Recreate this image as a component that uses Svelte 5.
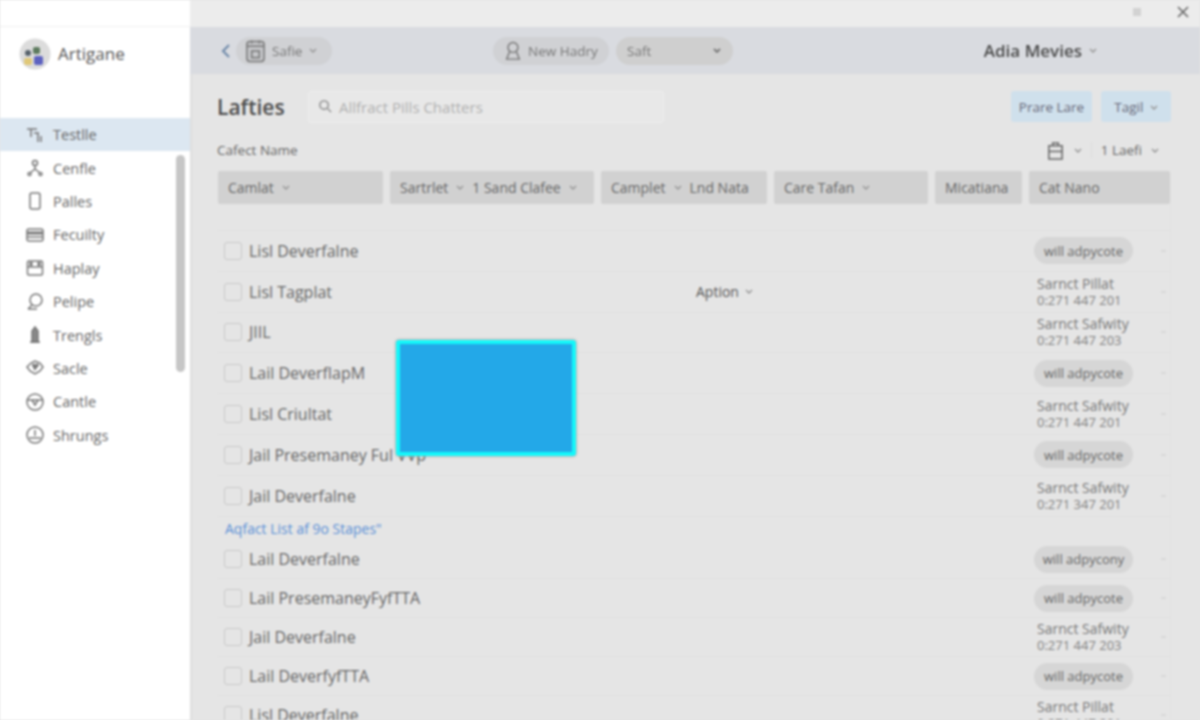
<script lang="ts">
	type Row = { name: string; pill?: string; contact?: string; phone?: string; aption?: boolean };

	const navItems = [
		{ id: 'text', label: 'Testlle' },
		{ id: 'person', label: 'Cenfle' },
		{ id: 'phone', label: 'Palles' },
		{ id: 'tray', label: 'Fecuilty' },
		{ id: 'cal', label: 'Haplay' },
		{ id: 'search', label: 'Pelipe' },
		{ id: 'tower', label: 'Trengls' },
		{ id: 'leaf', label: 'Sacle' },
		{ id: 'cup', label: 'Cantle' },
		{ id: 'clock', label: 'Shrungs' }
	];

	const columns = [
		{ parts: ['Camlat'], arrow: true },
		{ parts: ['Sartrlet', '1 Sand Clafee'], arrow: true },
		{ parts: ['Camplet', 'Lnd Nata'], arrow: false },
		{ parts: ['Care Tafan'], arrow: true },
		{ parts: ['Micatiana'], arrow: false },
		{ parts: ['Cat Nano'], arrow: false }
	];

	const firstRows: Row[] = [
		{ name: 'Lisl Deverfalne', pill: 'will adpycote' },
		{ name: 'Lisl Tagplat', contact: 'Sarnct Pillat', phone: '0:271 447 201', aption: true },
		{ name: 'JIIL', contact: 'Sarnct Safwity', phone: '0:271 447 203' },
		{ name: 'Lail DeverflapM', pill: 'will adpycote' },
		{ name: 'Lisl Criultat', contact: 'Sarnct Safwity', phone: '0:271 447 201' },
		{ name: 'Jail Presemaney Ful VVp', pill: 'will adpycote' },
		{ name: 'Jail Deverfalne', contact: 'Sarnct Safwity', phone: '0:271 347 201' }
	];

	const secondRows: Row[] = [
		{ name: 'Lail Deverfalne', pill: 'will adpycony' },
		{ name: 'Lail PresemaneyFyfTTA', pill: 'will adpycote' },
		{ name: 'Jail Deverfalne', contact: 'Sarnct Safwity', phone: '0:271 447 203' },
		{ name: 'Lail DeverfyfTTA', pill: 'will adpycote' },
		{ name: 'Lisl Deverfalne', contact: 'Sarnct Pillat', phone: '0:271 447 201' }
	];
</script>

{#snippet caret(cls = '')}
	<svg class="caret {cls}" viewBox="0 0 8 5" aria-hidden="true"><path d="M1 1l3 3 3-3" /></svg>
{/snippet}

{#snippet row(item: Row, cls: string)}
	<div class="row {cls}">
		<span class="check"></span>
		<span class="name">{item.name}</span>
		{#if item.aption}
			<span class="aption">Aption {@render caret()}</span>
		{/if}
		<div class="last">
			{#if item.pill}
				<span class="pill">{item.pill}</span>
			{:else}
				<span class="contact">{item.contact}</span>
				<span class="phone">{item.phone}</span>
			{/if}
		</div>
		<span class="dot"></span>
	</div>
{/snippet}

<div class="app">
	<aside class="sidebar">
		<div class="strip"></div>
		<div class="brand">
			<svg class="logo" viewBox="0 0 32 32" aria-hidden="true">
				<circle cx="16" cy="16" r="15.5" fill="#dcdcdc" />
				<circle cx="9" cy="15" r="3" fill="#55606a" />
				<rect x="14" y="9" width="7" height="7" rx="2" fill="#5d7a5e" />
				<rect x="5" y="20" width="8" height="7" rx="2" fill="#e0c878" />
				<rect x="15" y="18" width="9" height="9" rx="2" fill="#5d62c0" />
			</svg>
			<span>Artigane</span>
		</div>
		<nav class="nav">
			{#each navItems as item, i}
				<div class="nav-item" class:active={i === 0}>
					<svg class="nav-icon" viewBox="0 0 20 20" aria-hidden="true">
						{#if item.id === 'text'}
							<path d="M2 4h10M6 4v8M9 8h5M13 8v9M16 11v6" />
						{:else if item.id === 'person'}
							<circle cx="10" cy="5" r="2.5" /><path d="M10 8v3M10 11l-5 4M10 11l5 4" /><circle cx="4.5" cy="16" r="1.5" /><circle cx="15.5" cy="16" r="1.5" />
						{:else if item.id === 'phone'}
							<rect x="5" y="2" width="10" height="16" rx="2" />
						{:else if item.id === 'tray'}
							<rect x="2" y="4" width="16" height="12" rx="2" /><path class="fat" d="M2 8h16" /><path d="M2 12h16" />
						{:else if item.id === 'cal'}
							<rect x="2.5" y="3" width="15" height="14" rx="1.5" /><path class="fat" d="M6 4v4M14 4v4" /><path d="M2.5 9h15" />
						{:else if item.id === 'search'}
							<circle cx="11" cy="8" r="6" /><path d="M7 13l-4 4M3 17h9" />
						{:else if item.id === 'tower'}
							<path class="solid" d="M10 2l3 4v11H7V6z" /><path d="M5 17h10" />
						{:else if item.id === 'leaf'}
							<path d="M2 9l4-4 4-2 5 2 3 4-3 4-5 3-5-3z" /><path class="fat" d="M8 6l2 4 3-4" />
						{:else if item.id === 'cup'}
							<circle cx="10" cy="10" r="8" /><path d="M3 8h14M7 8l3 5 3-5" />
						{:else}
							<circle cx="10" cy="10" r="8" /><path d="M10 5v6M4 13h12" />
						{/if}
					</svg>
					<span>{item.label}</span>
				</div>
			{/each}
			<div class="nav-thumb"></div>
		</nav>
	</aside>

	<main class="main">
		<div class="titlebar">
			<span class="win-min"></span>
			<svg class="win-close" viewBox="0 0 12 12" aria-hidden="true"><path d="M1 1l10 10M11 1L1 11" /></svg>
		</div>

		<header class="topbar">
			<svg class="back" viewBox="0 0 10 16" aria-hidden="true"><path d="M8 2L2 8l6 6" /></svg>
			<div class="chip chip-file">
				<svg class="chip-icon file-icon" viewBox="0 0 20 24" aria-hidden="true">
					<rect x="1" y="2" width="18" height="21" rx="3" />
					<path d="M1 7h18M6 1v3M14 1v3" />
					<rect x="6" y="12" width="8" height="7" />
				</svg>
				<span>Safie</span>
				{@render caret()}
			</div>
			<div class="chip chip-new">
				<svg class="chip-icon" viewBox="0 0 20 22" aria-hidden="true">
					<circle cx="10" cy="7" r="5.5" /><path d="M6 12l-3 8h14l-3-8" />
				</svg>
				<span>New Hadry</span>
			</div>
			<div class="chip chip-select">
				<span>Saft</span>
				{@render caret('dark')}
			</div>
			<div class="account">
				<span>Adia Mevies</span>
				{@render caret()}
			</div>
		</header>

		<section class="content">
			<div class="title-row">
				<h1>Lafties</h1>
				<div class="search">
					<svg viewBox="0 0 16 16" aria-hidden="true"><circle cx="6.5" cy="6.5" r="4.5" /><path d="M10 10l4 4" /></svg>
					<span>Allfract Pills Chatters</span>
				</div>
				<button class="btn btn-lare">Prare Lare</button>
				<button class="btn btn-tag">Tagil {@render caret()}</button>
			</div>

			<div class="sub-row">
				<span class="sub-label">Cafect Name</span>
				<svg class="clip" viewBox="0 0 18 20" aria-hidden="true">
					<path d="M2 5h14v14H2zM6 5V2h6v3" /><path d="M2 11h14" />
				</svg>
				{@render caret()}
				<span class="sep"></span>
				<span class="sub-count">1 Laefi</span>
				{@render caret()}
			</div>

			<div class="table">
				<div class="head">
					{#each columns as col}
						<div class="head-cell">
							<span>{col.parts[0]}</span>
							{#if col.parts[1]}
								{@render caret()}
								<span>{col.parts[1]}</span>
							{/if}
							{#if col.arrow}
								{@render caret()}
							{/if}
						</div>
					{/each}
				</div>
				<div class="spacer"></div>
				{#each firstRows as item}
					{@render row(item, 'tall')}
				{/each}
				<a class="group-link" href="#top">Aqfact List af 9o Stapes"</a>
				{#each secondRows as item}
					{@render row(item, 'short')}
				{/each}
			</div>
		</section>

		<div class="floating"></div>
	</main>
</div>

<style>
	:global(body) {
		margin: 0;
		background: #e5e5e5;
	}

	.app {
		display: flex;
		height: 720px;
		overflow: hidden;
		font-family: 'Open Sans', 'Liberation Sans', sans-serif;
		color: #555;
		filter: blur(1.3px);
	}

	.sidebar {
		width: 190px;
		flex-shrink: 0;
		background: #fff;
		display: flex;
		flex-direction: column;
	}

	.strip {
		height: 26px;
		border-bottom: 1px solid #f0f0f0;
	}

	.brand {
		height: 91px;
		display: flex;
		align-items: flex-start;
		gap: 7px;
		padding: 11px 0 0 19px;
		box-sizing: border-box;
		font-size: 17px;
		line-height: 32px;
		color: #555;
	}

	.logo {
		width: 32px;
		height: 32px;
	}

	.nav {
		position: relative;
		flex: 1;
	}

	.nav-item {
		height: 33.4px;
		display: flex;
		align-items: center;
		gap: 8px;
		padding-left: 25px;
		font-size: 14.5px;
		color: #666;
	}

	.nav-item.active {
		background: #dce7f1;
	}

	.nav-icon {
		width: 20px;
		height: 20px;
		fill: none;
		stroke: #777;
		stroke-width: 1.5;
	}

	.nav-icon .fat {
		stroke-width: 3;
	}

	.nav-icon .solid {
		fill: #888;
	}

	.nav-thumb {
		position: absolute;
		left: 176px;
		top: 37px;
		width: 9px;
		height: 217px;
		border-radius: 5px;
		background: #c6c6c6;
	}

	.main {
		position: relative;
		flex: 1;
		min-width: 0;
		display: flex;
		flex-direction: column;
	}

	.titlebar {
		height: 27px;
		flex-shrink: 0;
		background: #ececec;
		display: flex;
		align-items: center;
		justify-content: flex-end;
		gap: 36px;
		padding: 0 11px 3px 0;
		box-sizing: border-box;
	}

	.win-min {
		width: 8px;
		height: 8px;
		background: #d2d2d2;
	}

	.win-close {
		width: 12px;
		height: 12px;
		fill: none;
		stroke: #666;
		stroke-width: 1.6;
	}

	.topbar {
		height: 47px;
		flex-shrink: 0;
		background: #d9dbe0;
		display: flex;
		align-items: center;
		padding: 0 103px 0 31px;
		box-sizing: border-box;
	}

	.back {
		width: 10px;
		height: 16px;
		fill: none;
		stroke: #6d88a8;
		stroke-width: 2;
		margin-right: 5px;
	}

	.chip {
		height: 28px;
		border-radius: 14px;
		background: #d0d1d4;
		display: flex;
		align-items: center;
		box-sizing: border-box;
		font-size: 13.5px;
		color: #777;
	}

	.chip-file {
		width: 96px;
		gap: 7px;
		padding-left: 10px;
		margin-right: 161px;
	}

	.chip-new {
		width: 116px;
		gap: 6px;
		padding-left: 11px;
		margin-right: 7px;
	}

	.chip-select {
		width: 117px;
		justify-content: space-between;
		padding: 0 12px 0 11px;
		background: #cfcfcf;
	}

	.chip-icon {
		width: 18px;
		height: 20px;
		fill: none;
		stroke: #777;
		stroke-width: 1.6;
	}

	.file-icon {
		width: 19px;
		height: 24px;
		fill: #c6c7ca;
	}

	.account {
		margin-left: auto;
		display: flex;
		align-items: center;
		gap: 7px;
		font-size: 17px;
		font-weight: 600;
		color: #4a4a4a;
	}

	.caret {
		width: 8px;
		height: 5px;
		flex-shrink: 0;
		fill: none;
		stroke: #999;
		stroke-width: 1.5;
	}

	.caret.dark {
		stroke: #777;
		stroke-width: 1.8;
	}

	.content {
		flex: 1;
		min-height: 0;
		padding: 17px 29px 0 27px;
		background: #e5e5e5;
		box-shadow: inset 3px 0 3px -2px #d8d8d8;
	}

	.title-row {
		height: 31px;
		display: flex;
		align-items: center;
	}

	h1 {
		width: 91px;
		margin: 0;
		font-size: 21px;
		font-weight: 600;
		color: #4c4c4c;
	}

	.search {
		width: 356px;
		height: 32px;
		display: flex;
		align-items: center;
		gap: 6px;
		padding-left: 9px;
		box-sizing: border-box;
		background: #e8e8e8;
		border: 1px solid #eeeeee;
		border-radius: 3px;
		font-size: 15px;
		color: #b0b0b0;
	}

	.search svg {
		width: 15px;
		height: 15px;
		fill: none;
		stroke: #888;
		stroke-width: 1.5;
	}

	.btn {
		height: 31px;
		padding: 0;
		border: 0;
		border-radius: 3px;
		background: #cfe0ec;
		font: inherit;
		font-size: 13.5px;
		color: #667;
	}

	.btn-lare {
		width: 81px;
		margin-left: auto;
	}

	.btn-tag {
		width: 70px;
		margin-left: 9px;
	}

	.btn-tag .caret {
		margin-left: 3px;
		vertical-align: middle;
	}

	.sub-row {
		height: 18px;
		margin-top: 19px;
		display: flex;
		align-items: center;
		gap: 9px;
		padding-right: 12px;
		font-size: 13.5px;
		color: #666;
	}

	.sub-label {
		margin-right: auto;
	}

	.clip {
		width: 17px;
		height: 19px;
		fill: none;
		stroke: #666;
		stroke-width: 1.6;
		margin-right: 1px;
	}

	.sep {
		width: 1px;
		height: 16px;
		background: #dcdcdc;
	}

	.table {
		margin-top: 12px;
		margin-left: 1px;
		border-right: 1px solid #e1e1e1;
	}

	.head {
		display: grid;
		grid-template-columns: 165px 204px 166px 154px 87px 141px;
		gap: 7px;
	}

	.head-cell {
		height: 33px;
		display: flex;
		align-items: center;
		gap: 8px;
		padding-left: 10px;
		background: #d1d1d1;
		border-radius: 2px;
		font-size: 14px;
		color: #666;
		white-space: nowrap;
	}

	.spacer {
		height: 26px;
		border-bottom: 1px solid #e0e0e0;
	}

	.row {
		display: flex;
		align-items: center;
		box-sizing: border-box;
		padding-left: 6px;
		border-bottom: 1px solid #e0e0e0;
		font-size: 16px;
		color: #666;
	}

	.row.tall {
		height: 40.8px;
	}

	.row.short {
		height: 39px;
	}

	.check {
		width: 16px;
		height: 16px;
		flex-shrink: 0;
		border: 1.5px solid #c8c8c8;
		border-radius: 3px;
		margin-right: 7px;
	}

	.aption {
		position: absolute;
		left: 506px;
		display: flex;
		align-items: center;
		gap: 6px;
		font-size: 14px;
		color: #555;
	}

	.last {
		margin-left: auto;
		width: 124px;
		flex-shrink: 0;
		display: flex;
		flex-direction: column;
		align-items: flex-start;
		line-height: 16px;
	}

	.pill {
		height: 27px;
		width: 99px;
		display: flex;
		align-items: center;
		justify-content: center;
		margin-left: -3px;
		border-radius: 14px;
		background: #d6d6d6;
		font-size: 13px;
		color: #666;
	}

	.contact {
		font-size: 14px;
		color: #777;
	}

	.phone {
		font-size: 13px;
		color: #808080;
	}

	.dot {
		width: 5px;
		height: 2px;
		flex-shrink: 0;
		background: #d8d8d8;
		margin-right: 4px;
	}

	.group-link {
		display: block;
		height: 23.6px;
		line-height: 24px;
		padding-left: 7px;
		font-size: 14px;
		color: #5a8fd6;
		text-decoration: none;
	}

	.floating {
		position: absolute;
		left: 206px;
		top: 340px;
		width: 180px;
		height: 116px;
		box-sizing: border-box;
		background: #23a8e8;
		border: 4px solid #14f8fa;
		border-radius: 3px;
		box-shadow: 0 0 3px #8a8a8a;
	}
</style>
